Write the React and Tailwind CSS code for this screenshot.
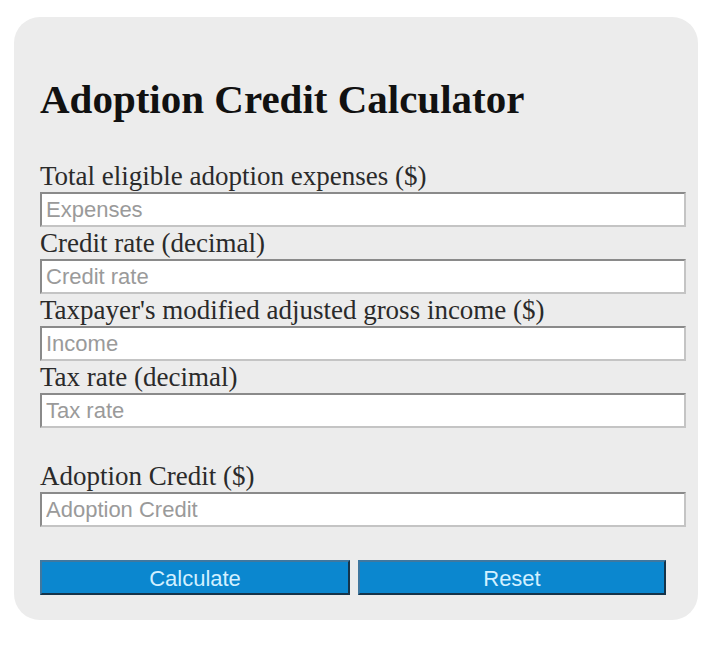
import { useState } from "react";

const fields = [
  { key: "expenses", label: "Total eligible adoption expenses ($)", placeholder: "Expenses" },
  { key: "rate", label: "Credit rate (decimal)", placeholder: "Credit rate" },
  { key: "income", label: "Taxpayer's modified adjusted gross income ($)", placeholder: "Income" },
  { key: "tax", label: "Tax rate (decimal)", placeholder: "Tax rate" },
];

const inputCls =
  "block w-[646px] h-[35px] bg-white border-2 border-[#8a8a8a] border-b-[#c4c4c4] border-r-[#c4c4c4] px-[4px] text-[22px] font-['Liberation_Sans',sans-serif] placeholder:text-[#9a9a9a] outline-none";

const btnCls =
  "h-[35px] bg-[#0b87cf] border-2 border-[#3f78a0] border-b-[#15344a] border-r-[#15344a] text-[22px] text-[#d2f0ff]";

export default function App() {
  const [values, setValues] = useState({ expenses: "", rate: "", income: "", tax: "" });
  const [credit, setCredit] = useState("");

  function calculate() {
    const exp = parseFloat(values.expenses);
    const rate = parseFloat(values.rate);
    if (isNaN(exp) || isNaN(rate)) return;
    setCredit((exp * rate).toFixed(2));
  }

  function reset() {
    setValues({ expenses: "", rate: "", income: "", tax: "" });
    setCredit("");
  }

  return (
    <div className="min-h-[646px] bg-white pt-[17px] pl-[14px]">
      <div className="w-[684px] h-[603px] rounded-[26px] bg-[#ececec] px-[26px] pt-[58px] font-['Liberation_Serif',serif] text-[#222]">
        <h1 className="text-[41px] font-bold leading-[48px] text-[#111] mb-[37px]">Adoption Credit Calculator</h1>

        {fields.map((f) => (
          <div key={f.key}>
            <label className="block text-[27px] leading-[32px] text-[#2a2a2a]">{f.label}</label>
            <input
              type="text"
              value={values[f.key]}
              placeholder={f.placeholder}
              onChange={(e) => setValues({ ...values, [f.key]: e.target.value })}
              className={inputCls}
            />
          </div>
        ))}

        <div className="mt-[32px]">
          <label className="block text-[27px] leading-[32px] text-[#2a2a2a]">Adoption Credit ($)</label>
          <input type="text" readOnly value={credit} placeholder="Adoption Credit" className={inputCls} />
        </div>

        <div className="mt-[33px] flex gap-[8px] font-['Liberation_Sans',sans-serif]">
          <button onClick={calculate} className={`w-[310px] ${btnCls}`}>
            Calculate
          </button>
          <button onClick={reset} className={`w-[308px] ${btnCls}`}>
            Reset
          </button>
        </div>
      </div>
    </div>
  );
}
